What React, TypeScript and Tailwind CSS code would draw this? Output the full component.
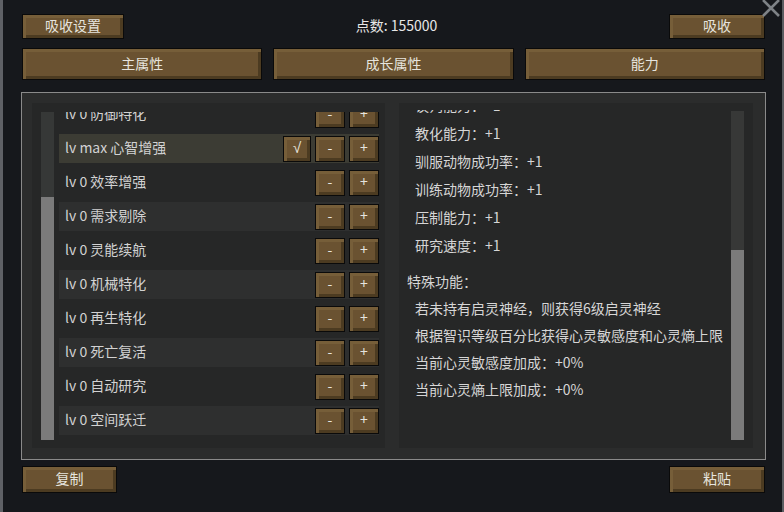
import React from 'react';
import clsx from 'clsx';

// wooden bevelled button used everywhere in this dialog
function WoodButton({ children, className }: { children?: React.ReactNode; className?: string }) {
  return (
    <div
      className={clsx(
        'flex items-center justify-center border border-[#0a0a0a] bg-[#6a5231] pb-[3px] text-[14px] leading-none text-[#e6e4de]',
        'shadow-[inset_3px_3px_0_#765e39,inset_-3px_-3px_0_#4c3b21]',
        className
      )}
    >
      {children}
    </div>
  );
}

const rows = [
  { label: 'lv 0 防御特化' },
  { label: 'lv max 心智增强', active: true },
  { label: 'lv 0 效率增强' },
  { label: 'lv 0 需求剔除' },
  { label: 'lv 0 灵能续航' },
  { label: 'lv 0 机械特化' },
  { label: 'lv 0 再生特化' },
  { label: 'lv 0 死亡复活' },
  { label: 'lv 0 自动研究' },
  { label: 'lv 0 空间跃迁' },
];

const stats = ['谈判能力：+1', '教化能力：+1', '驯服动物成功率：+1', '训练动物成功率：+1', '压制能力：+1', '研究速度：+1'];

const specials = [
  '若未持有启灵神经，则获得6级启灵神经',
  '根据智识等级百分比获得心灵敏感度和心灵熵上限',
  '当前心灵敏感度加成：+0%',
  '当前心灵熵上限加成：+0%',
];

function AbilityRow({ label, active, odd }: { label: string; active?: boolean; odd: boolean }) {
  return (
    <div className="h-[34px]">
      <div
        className={clsx(
          'flex h-[29px] items-center pl-[6px] text-[14px] text-[#d2d2d2]',
          active ? 'bg-[#3c3c34]' : odd ? 'bg-[#2e2f2f]' : 'bg-transparent'
        )}
      >
        <span className="pb-[2px]">{label}</span>
        <div className="ml-auto flex gap-[4px]">
          {active && (
            <WoodButton className="h-[26px] w-[28px] font-['Liberation_Sans',sans-serif] text-[15px]">√</WoodButton>
          )}
          <WoodButton className={clsx('h-[26px] w-[30px]', active ? 'text-[#f0f0f0]' : 'text-[#a89678]')}>-</WoodButton>
          <WoodButton className="h-[26px] w-[30px] text-[#e2e2e2]">+</WoodButton>
        </div>
      </div>
    </div>
  );
}

export default function App() {
  return (
    <div className="relative flex h-[512px] w-[784px] overflow-hidden bg-[#16181c] font-['Noto_Sans_CJK_SC','Noto_Sans',sans-serif]">
      <div className="w-[3px] bg-[#5f6166]" />

      <div className="flex flex-1 flex-col pl-[18px] pr-[16px]">
        {/* header */}
        <div className="mt-[14px] flex h-[25px] items-center justify-between px-[1px]">
          <WoodButton className="h-[25px] w-[102px]">吸收设置</WoodButton>
          <span className="pb-[2px] text-[14px] text-[#e6e6e6]">点数: 155000</span>
          <WoodButton className="h-[25px] w-[96px]">吸收</WoodButton>
        </div>

        {/* tabs */}
        <div className="mt-[9px] grid h-[32px] grid-cols-3 gap-[11px] px-[1px]">
          <WoodButton>主属性</WoodButton>
          <WoodButton>成长属性</WoodButton>
          <WoodButton>能力</WoodButton>
        </div>

        {/* body */}
        <div className="mt-[12px] flex h-[368px] gap-[14px] border border-[#8a8a8a] bg-[#2b2c2c] pb-[11px] pl-[10px] pr-[12px] pt-[10px]">
          {/* ability list */}
          <div className="flex w-[353px] gap-[5px] bg-[#262727] pb-[8px] pl-[9px] pr-[6px] pt-[9px]">
            <div className="flex w-[13px] flex-col bg-[#363837]">
              <div className="h-[85px]" />
              <div className="flex-1 bg-[#7b7b7b]" />
            </div>
            <div className="flex-1 overflow-hidden">
              <div className="mt-[-12px]">
                {rows.map((r, i) => (
                  <AbilityRow key={r.label} label={r.label} active={r.active} odd={i % 2 === 1} />
                ))}
              </div>
            </div>
          </div>

          {/* description */}
          <div className="flex flex-1 bg-[#262727] pb-[8px] pl-[8px] pr-[9px] pt-[7px]">
            <div className="flex-1 overflow-hidden text-[14px] text-[#d6d6d6]">
              <div className="mt-[-19px]">
                {stats.map((s) => (
                  <div key={s} className="flex h-[28px] items-center pl-[8px]">
                    {s}
                  </div>
                ))}
                <div className="mt-[9px] flex h-[27px] items-center">特殊功能：</div>
                {specials.map((s) => (
                  <div key={s} className="flex h-[27px] items-center whitespace-nowrap pl-[8px]">
                    {s}
                  </div>
                ))}
              </div>
            </div>
            <div className="mt-[1px] flex w-[13px] flex-col bg-[#373837]">
              <div className="h-[139px]" />
              <div className="flex-1 bg-[#7b7b7b]" />
            </div>
          </div>
        </div>

        {/* footer */}
        <div className="mt-[6px] flex h-[27px] justify-between px-[1px]">
          <WoodButton className="w-[95px]">复制</WoodButton>
          <WoodButton className="w-[96px]">粘贴</WoodButton>
        </div>
      </div>

      <div className="w-[2px] bg-[#5b5d61]" />

      {/* close button in the corner */}
      <svg className="absolute left-[759px] top-[-4px]" width="24" height="24" viewBox="0 0 24 24">
        <path d="M4 4 L20 20 M20 4 L4 20" stroke="#7e8286" strokeWidth="2.6" fill="none" />
      </svg>
    </div>
  );
}
